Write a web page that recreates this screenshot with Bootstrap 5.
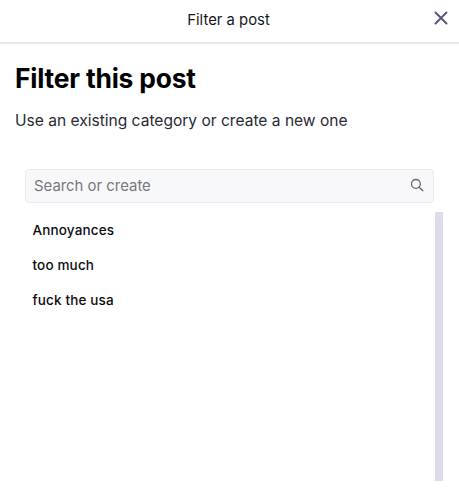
<!DOCTYPE html>
<html lang="en">
<head>
<meta charset="utf-8">
<title>Filter a post</title>
<link rel="stylesheet" href="https://cdn.jsdelivr.net/npm/bootstrap@5.3.0/dist/css/bootstrap.min.css">
<style>
html, body { height: 501px; overflow: hidden; }
body { font-family: Inter, "Liberation Sans", sans-serif; background: #fff; color: #000; }
.top-bar { height: 44px; border-bottom: 2px solid #e8e8ef; padding: 0 2px 1px 0; }
.top-title { font-size: 14.85px; color: #16161d; line-height: 1; }
.close-x { width: 16px; height: 16px; color: #55557a; background: none; border: 0; padding: 0; line-height: 0; top: 9.5px; right: 10.5px; }
.page-head { padding: 18px 15px 0; }
.page-title { font-size: 26.4px; font-weight: 700; line-height: 32px; letter-spacing: -0.2px; margin: 0 0 15px; color: #000; }
.page-sub { font-size: 15.55px; line-height: 24px; color: #2a2a33; margin: 0; }
.search-wrap { margin: 36px 25px 0; height: 34px; background: #f8f8fb; border: 1px solid #e9e9f1; border-radius: 4px; padding: 1px 9px 0 8px; }
.search-input { border: 0; background: transparent; outline: 0; font-size: 14.9px; color: #333; padding: 0; flex: 1 1 auto; min-width: 0; }
.search-input::placeholder { color: #77777f; opacity: 1; }
.search-ico { width: 14px; height: 14px; color: #66666e; margin-top: -3px; }
.list-zone { margin: 9px 16px 0 0; height: 269px; }
.cat-list { padding-left: 32.5px; padding-top: 0.5px; }
.cat-item { font-size: 13.5px; font-weight: 500; line-height: 35px; height: 35px; color: #0c0c12; letter-spacing: 0.15px; border: 0; padding: 0; background: none; }
.scroll-bar { width: 8px; background: #dcdcea; }
</style>
</head>
<body>
<header class="top-bar d-flex align-items-center justify-content-center position-relative">
  <span class="top-title">Filter a post</span>
  <button class="close-x position-absolute" type="button" aria-label="Close">
    <svg viewBox="0 0 16 16" width="16" height="16" fill="none" stroke="currentColor" stroke-width="1.9" stroke-linecap="round"><path d="M2.5 2.5l11 11M13.5 2.5l-11 11"/></svg>
  </button>
</header>
<section class="page-head">
  <h1 class="page-title">Filter this post</h1>
  <p class="page-sub">Use an existing category or create a new one</p>
</section>
<div class="search-wrap d-flex align-items-center">
  <input class="search-input" type="text" placeholder="Search or create" aria-label="Search or create">
  <svg class="search-ico" viewBox="0 0 14 14" fill="none" stroke="currentColor" stroke-width="1.3" stroke-linecap="round"><circle cx="5.9" cy="5.9" r="4.4"/><path d="M9.2 9.2l3.6 3.6"/></svg>
</div>
<div class="list-zone d-flex justify-content-between">
  <div class="cat-list list-group list-group-flush">
    <div class="cat-item list-group-item">Annoyances</div>
    <div class="cat-item list-group-item">too much</div>
    <div class="cat-item list-group-item">fuck the usa</div>
  </div>
  <div class="scroll-bar"></div>
</div>
<script src="https://cdn.jsdelivr.net/npm/bootstrap@5.3.0/dist/js/bootstrap.bundle.min.js"></script>
</body>
</html>
